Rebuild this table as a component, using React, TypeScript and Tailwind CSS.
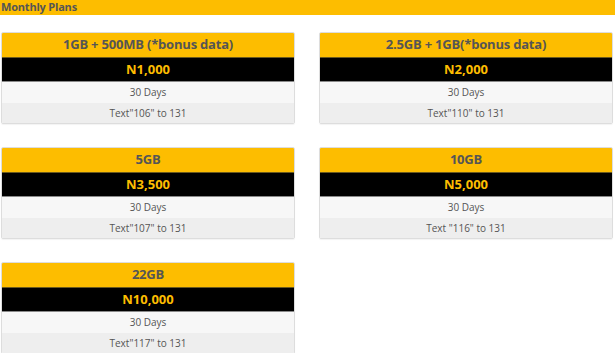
import React from 'react';

interface Plan {
  title: string;
  price: string;
  validity: string;
  code: string;
}

const plans: Plan[] = [
  { title: '1GB + 500MB (*bonus data)', price: 'N1,000', validity: '30 Days', code: 'Text"106" to 131' },
  { title: '2.5GB + 1GB(*bonus data)', price: 'N2,000', validity: '30 Days', code: 'Text"110" to 131' },
  { title: '5GB', price: 'N3,500', validity: '30 Days', code: 'Text"107" to 131' },
  { title: '10GB', price: 'N5,000', validity: '30 Days', code: 'Text "116" to 131' },
  { title: '22GB', price: 'N10,000', validity: '30 Days', code: 'Text"117" to 131' },
];

const PlanCard: React.FC<{ plan: Plan }> = ({ plan }) => (
  <div className="border border-[#dddddd] rounded-[2px] shadow-[0_1px_1px_rgba(0,0,0,0.05)] overflow-hidden text-center">
    <div className="bg-[#fdbd00] h-[25px] flex items-center justify-center border-b border-[#6b5a1e] text-[13px] font-bold text-[#555555] tracking-[-0.2px]">
      {plan.title}
    </div>
    <div className="bg-black h-[24px] flex items-center justify-center border-b border-[#8a8a8a] text-[13px] font-bold text-[#fdbd00]">
      {plan.price}
    </div>
    <div className="bg-[#f7f7f7] h-[21px] flex items-center justify-center text-[10px] text-[#555555]">
      {plan.validity}
    </div>
    <div className="bg-[#eeeeee] h-[20px] flex items-center justify-center text-[10px] text-[#555555]">
      {plan.code}
    </div>
  </div>
);

export default function App() {
  return (
    <div className="w-[615px] h-[353px] bg-white overflow-hidden font-['Open_Sans',sans-serif]">
      <div className="bg-[#fdbd00] h-[15px] flex items-center px-[1px] text-[11px] font-bold text-[#555555] tracking-[-0.2px]">
        Monthly Plans
      </div>
      <div className="grid grid-cols-[294px_294px] gap-x-[24px] gap-y-[23px] pl-[1px] pt-[17px]">
        {plans.map((p) => (
          <PlanCard key={p.code} plan={p} />
        ))}
      </div>
    </div>
  );
}
